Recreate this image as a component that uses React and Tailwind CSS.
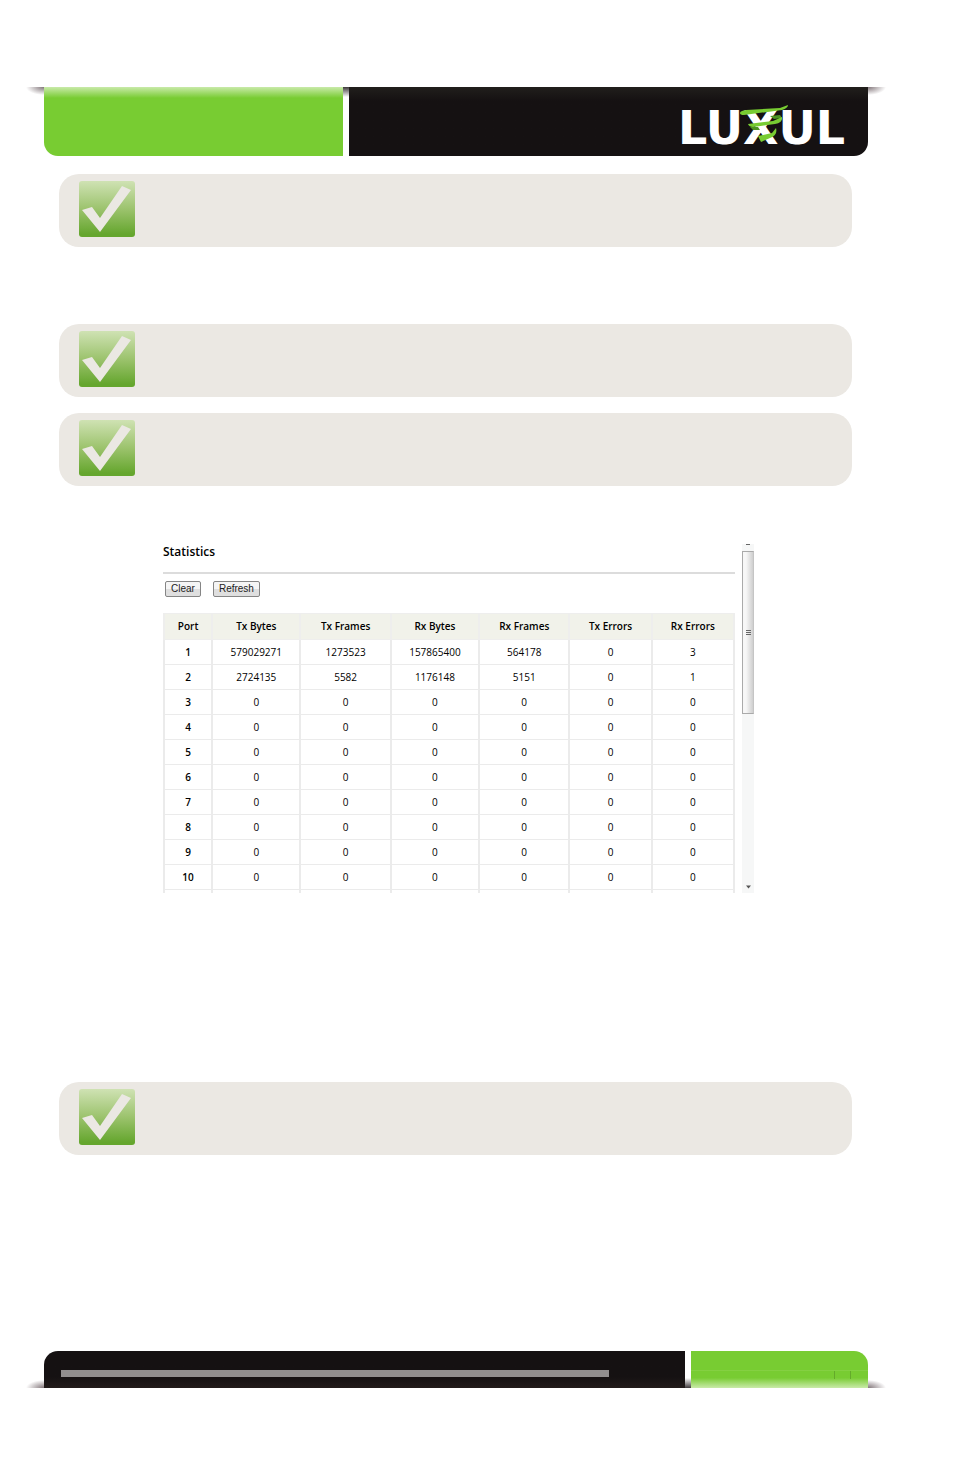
import React from 'react';

const columns = ['Port', 'Tx Bytes', 'Tx Frames', 'Rx Bytes', 'Rx Frames', 'Tx Errors', 'Rx Errors'];

const emptyRow = (port) => [port, 0, 0, 0, 0, 0, 0];

const rows = [
  [1, 579029271, 1273523, 157865400, 564178, 0, 3],
  [2, 2724135, 5582, 1176148, 5151, 0, 1],
  ...[3, 4, 5, 6, 7, 8, 9, 10].map(emptyRow),
];

const Logo = () => (
  <svg width="184" height="65" viewBox="0 -14 184 65" role="img" aria-label="Luxul">
    <text x="4" y="39" fill="#fff" fontSize="46" className="font-['DejaVu_Sans',sans-serif] font-bold">LUXUL</text>
    <path d="M66 8 Q66 6 72 5 L106 3 L114 0 Q114 3 108 5 L70 10 Q66 10 66 8Z" fill="#78cc32" />
    <path d="M96 11 L106 10 L108 13 L100 14Z" fill="#4b9422" />
    <path d="M74 19 L99 16 L108 12 Q109 18 101 19 L79 22 Q75 22 74 19Z" fill="#78cc32" />
    <path d="M76 22 L84 22 L86 25 L79 25Z" fill="#4b9422" />
    <path d="M84 31 L98 28 L102 23 Q104 30 96 33 L87 37 Z" fill="#78cc32" />
  </svg>
);

const CheckIcon = () => (
  <svg width="56" height="57" viewBox="0 0 56 57" aria-hidden="true">
    <defs>
      <linearGradient id="tick" x1="0" y1="0" x2="0" y2="1">
        <stop offset="0" stopColor="#cfe2b3" />
        <stop offset="0.5" stopColor="#9cc36d" />
        <stop offset="0.95" stopColor="#65a62e" />
        <stop offset="1" stopColor="#65a62e" />
      </linearGradient>
    </defs>
    <rect width="56" height="56" rx="3" fill="url(#tick)" />
    <path d="M3 29 L13 26 L21 37 L43 5 L52 9 L21 51Z" fill="#ebe8e3" />
  </svg>
);

const Note = ({ className }) => (
  <div className={`ml-[15px] mr-4 h-[73px] rounded-[20px] bg-[#ebe8e3] pl-5 pt-[7px] ${className}`}>
    <CheckIcon />
  </div>
);

const Header = () => (
  <header className="relative flex h-[69px] gap-1.5">
    <div className="absolute top-0 -left-[18px] h-2 w-[18px] bg-[radial-gradient(farthest-side_at_top_right,#817579,transparent)]" />
    <div className="absolute top-0 -right-[18px] h-2 w-[18px] bg-[radial-gradient(farthest-side_at_top_left,#817579,transparent)]" />
    <div className="relative w-[299px] shrink-0 rounded-bl-[14px] bg-[#78cc32]">
      <div className="h-[11px] bg-linear-to-b from-[#c9eaa9] to-transparent" />
      <div className="absolute top-0 -right-1.5 h-2.5 w-1.5 bg-linear-to-b from-[#3e393b] to-transparent" />
    </div>
    <div className="flex flex-1 justify-end rounded-br-[14px] bg-linear-to-b from-[#211f1c] to-[#151112] to-20% pr-2.5 pt-1">
      <Logo />
    </div>
  </header>
);

const Footer = () => (
  <footer className="relative mt-[196px] flex h-[37px] gap-1.5">
    <div className="absolute bottom-0 -left-[18px] h-2 w-[18px] bg-[radial-gradient(farthest-side_at_bottom_right,#817579,transparent)]" />
    <div className="absolute bottom-0 -right-[18px] h-2 w-[18px] bg-[radial-gradient(farthest-side_at_bottom_left,#817579,transparent)]" />
    <div className="relative flex-1 rounded-tl-[14px] bg-linear-to-t from-[#221b1a] to-[#151112] to-30% pl-[17px] pr-[76px] pt-[19px]">
      <div className="h-[7px] bg-[#918e8e]" />
      <div className="absolute bottom-0 -right-1.5 h-2.5 w-1.5 bg-linear-to-t from-[#3e393b] to-transparent" />
    </div>
    <div className="flex w-[177px] shrink-0 flex-col justify-end rounded-tr-[14px] bg-[#78cc32]">
      <div className="flex h-[18px] justify-end border-t border-[#84d042] bg-linear-to-t from-[#c9eaa9] to-transparent to-60% pr-[17px]">
        <div className="h-2 w-[17px] border-x border-[#64aa2b]" />
      </div>
    </div>
  </footer>
);

const ActionButton = ({ children }) => (
  <button
    type="button"
    className="h-4 rounded-[2px] border border-[#858585] bg-linear-to-b from-[#f5f5f5] from-50% to-[#dfdfdf] to-50% px-[5px] font-['Liberation_Sans',Arial,sans-serif] text-[10px] leading-[14px] text-[#222]"
  >
    {children}
  </button>
);

const StatisticsTable = () => (
  <table className="w-full table-fixed border-collapse text-center text-[10px]">
    <colgroup>
      <col className="w-[48px]" />
      <col className="w-[88px]" />
      <col className="w-[90px]" />
      <col className="w-[88px]" />
      <col className="w-[90px]" />
      <col className="w-[82px]" />
      <col className="w-[82px]" />
    </colgroup>
    <thead>
      <tr className="h-[26px] bg-[#f1f2ea]">
        {columns.map((name) => (
          <th key={name} scope="col" className="border-x-2 border-y border-[#eeeeed] p-0 font-semibold">{name}</th>
        ))}
      </tr>
    </thead>
    <tbody>
      {rows.map(([port, ...values]) => (
        <tr key={port} className="h-[25px]">
          <th scope="row" className="border-x-2 border-y border-[#ebebeb] p-0 font-semibold">{port}</th>
          {values.map((value, i) => (
            <td key={i} className="border-x-2 border-y border-[#ebebeb] p-0">{value}</td>
          ))}
        </tr>
      ))}
      <tr className="h-[25px]">
        {columns.map((name) => (
          <td key={name} className="border-x-2 border-y border-[#ebebeb] p-0" />
        ))}
      </tr>
    </tbody>
  </table>
);

const Scrollbar = () => (
  <div className="flex w-3 shrink-0 flex-col items-center bg-[#f6f7f7]">
    <div className="h-[7px]">
      <div className="h-px w-1 bg-[#666]" />
    </div>
    <div className="flex h-[163px] w-full flex-col items-center justify-center gap-px border border-[#aaa] border-r-[#c5c5c5] bg-linear-to-r from-[#f7f7f7] from-30% to-[#cfcfcf]">
      <div className="h-px w-[5px] bg-[#666]" />
      <div className="h-px w-[5px] bg-[#666]" />
      <div className="h-px w-[5px] bg-[#666]" />
    </div>
    <svg className="mt-auto mb-1" width="5" height="4" viewBox="0 0 5 4" aria-hidden="true">
      <path d="M0 0.5 H5 L2.5 3.5Z" fill="#555" />
    </svg>
  </div>
);

const StatisticsPanel = () => (
  <section className="mt-[58px] mr-[114px] ml-[119px] flex h-[349px] gap-[7px] overflow-hidden font-['Open_Sans','Trebuchet_MS',sans-serif] text-black">
    <div className="min-w-0 flex-1">
      <h1 className="h-[28px] text-[12px] leading-4 font-semibold">Statistics</h1>
      <hr className="border-t-2 border-[#dcdcdc]" />
      <div className="flex gap-3 pt-[7px] pb-4 pl-0.5">
        <ActionButton>Clear</ActionButton>
        <ActionButton>Refresh</ActionButton>
      </div>
      <StatisticsTable />
    </div>
    <Scrollbar />
  </section>
);

const App = () => {
  return (
    <div className="bg-white pt-[87px] pr-[86px] pb-[86px] pl-11">
      <Header />
      <main>
        <Note className="mt-[18px]" />
        <Note className="mt-[77px]" />
        <Note className="mt-4" />
        <StatisticsPanel />
        <Note className="mt-[189px]" />
      </main>
      <Footer />
    </div>
  );
};

export default App;
